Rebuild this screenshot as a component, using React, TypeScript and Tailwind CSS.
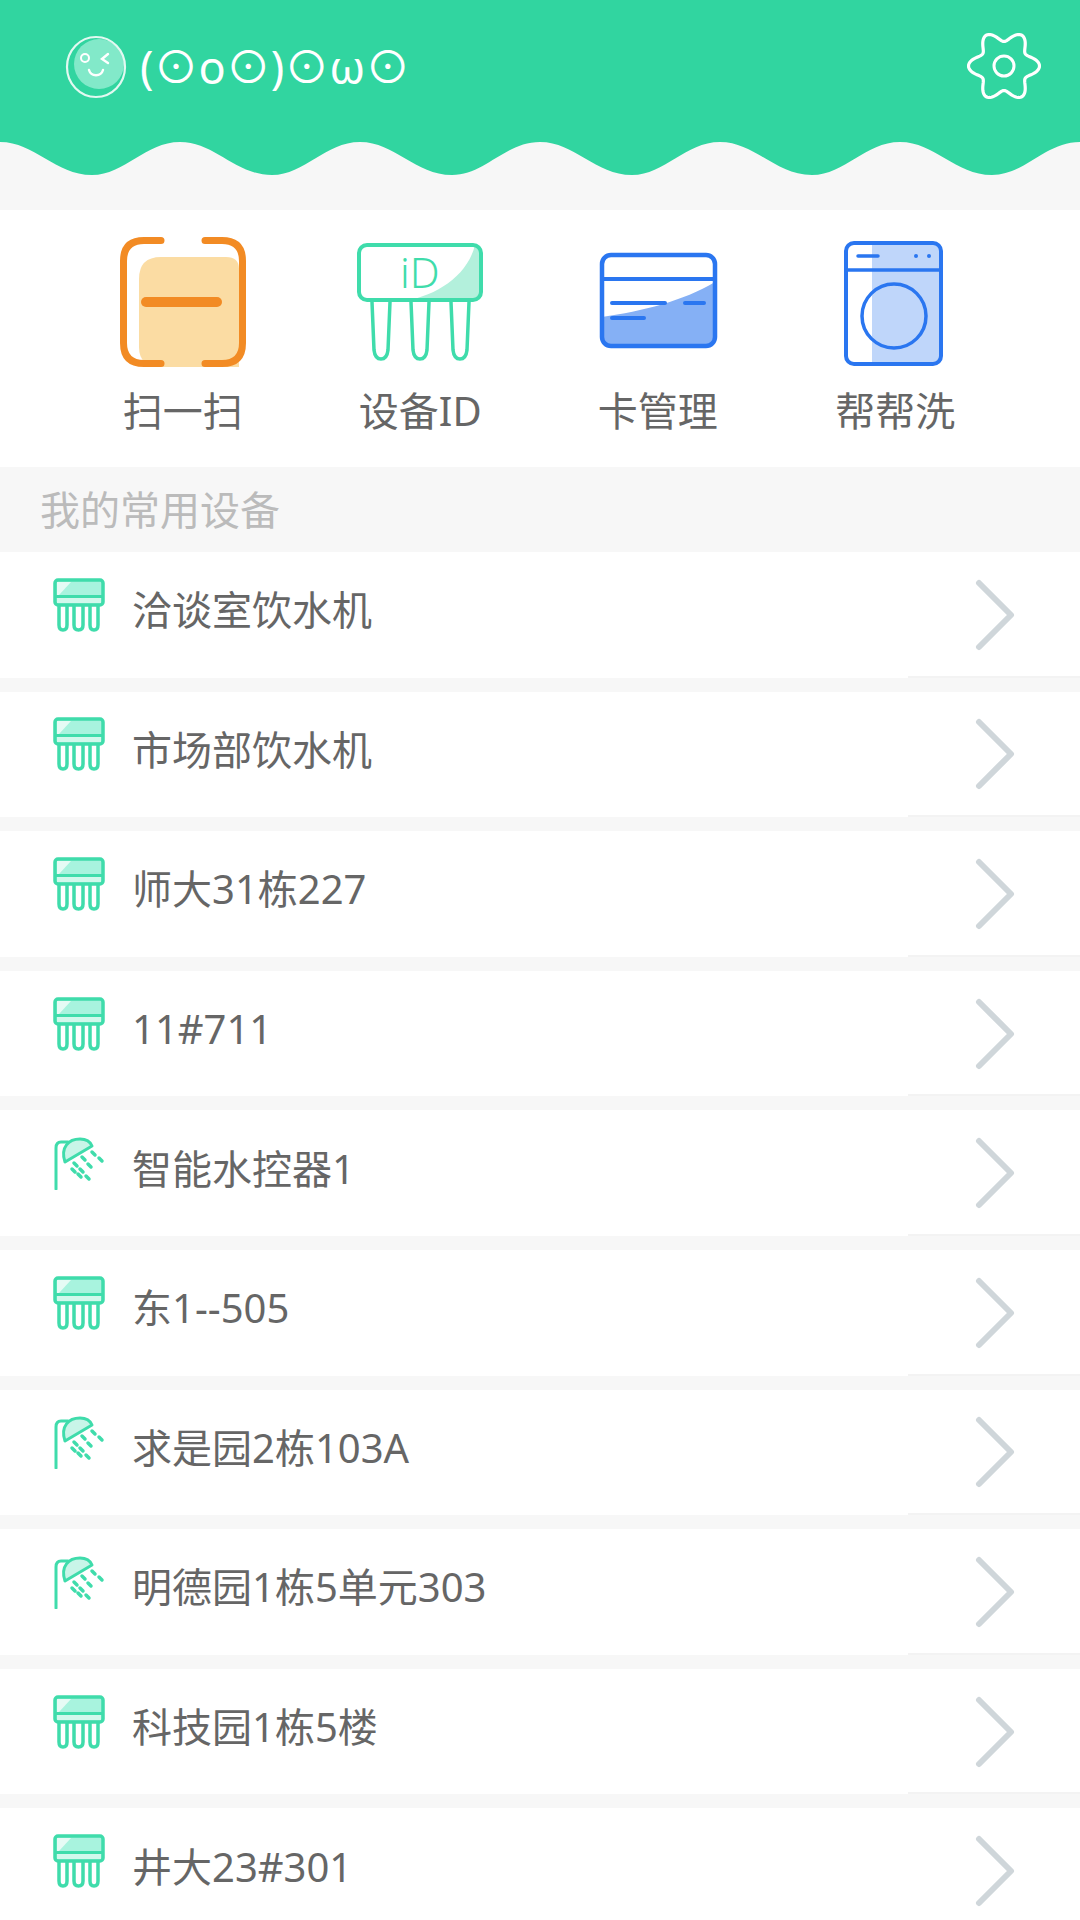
import React from 'react'

const GREEN = '#3fdcab'
const BLUE = '#2a76f0'
const ORANGE = '#f28b24'

const devices = [
  { name: '洽谈室饮水机', type: 'water' },
  { name: '市场部饮水机', type: 'water' },
  { name: '师大31栋227', type: 'water' },
  { name: '11#711', type: 'water' },
  { name: '智能水控器1', type: 'shower' },
  { name: '东1--505', type: 'water' },
  { name: '求是园2栋103A', type: 'shower' },
  { name: '明德园1栋5单元303', type: 'shower' },
  { name: '科技园1栋5楼', type: 'water' },
  { name: '井大23#301', type: 'water' },
]

// six lobed outline of the settings gear
const gearPath = () => {
  const pts: string[] = []
  for (let i = 0; i < 180; i++) {
    const t = (i / 180) * Math.PI * 2
    const r = 30 + 5.5 * Math.cos(6 * t)
    pts.push(`${(37 + r * Math.cos(t)).toFixed(2)} ${(36 + r * Math.sin(t)).toFixed(2)}`)
  }
  return 'M' + pts.join('L') + 'Z'
}

// one 180px swell of the header's lower edge, repeated six times
const wavePath = () => {
  let d = 'M0 0'
  for (let i = 0; i < 6; i++) {
    const x = i * 180
    d += ` C${x + 35} 0 ${x + 55} 33 ${x + 92} 33 C${x + 125} 33 ${x + 145} 0 ${x + 180} 0`
  }
  return d + ' Z'
}

const Wave: React.FC = () => (
  <svg viewBox="0 0 1080 68" className="block w-[1080px] h-[68px]">
    <path fill="#31d5a0" d={wavePath()} />
  </svg>
)

const Avatar: React.FC = () => (
  <svg viewBox="0 0 62 64" className="w-[62px] h-[64px] shrink-0">
    <circle cx="34" cy="29" r="25" fill="#82e9c9" />
    <ellipse cx="31" cy="32" rx="29" ry="30" fill="none" stroke="#e2f9f1" strokeWidth="2.200" />
    <circle cx="20" cy="23" r="4" fill="none" stroke="#fff" strokeWidth="2" />
    <path d="M43 19 L37 24 L43 28" fill="none" stroke="#fff" strokeWidth="2.400" strokeLinecap="round" />
    <path d="M24 35 C26 42 36 42 38 35" fill="none" stroke="#fff" strokeWidth="2.400" strokeLinecap="round" />
  </svg>
)

const ScanIcon: React.FC = () => (
  <svg viewBox="0 0 150 150" className="w-[150px] h-[150px]">
    <path d="M31 54 Q31 32 53 32 H118 Q131 32 131 44 V142 H53 Q31 142 31 122 Z" fill="#fbdca3" />
    <rect x="33" y="72" width="81" height="10" rx="5" fill={ORANGE} />
    <path d="M53 15.500 H36 Q15.500 15.500 15.500 36 V118 Q15.500 138.500 36 138.500 H53" fill="none" stroke={ORANGE} strokeWidth="7" strokeLinecap="round" />
    <path d="M97 15.500 H114 Q134.500 15.500 134.500 36 V118 Q134.500 138.500 114 138.500 H97" fill="none" stroke={ORANGE} strokeWidth="7" strokeLinecap="round" />
  </svg>
)

const IdIcon: React.FC = () => (
  <svg viewBox="0 0 150 150" className="w-[150px] h-[150px]">
    <path d="M54 77 C90 72 122 52 130 20 Q136 22 136 30 V68 Q136 75 128 75 Z" fill="#b3f0dc" />
    <rect x="14" y="20" width="122" height="55" rx="8" fill="none" stroke={GREEN} strokeWidth="4" />
    <path d="M27 77 L29 125 Q30 134 36 134 Q42 134 43 125 L45 77" fill="none" stroke={GREEN} strokeWidth="3.500" />
    <path d="M66 77 L68 125 Q69 134 75 134 Q81 134 82 125 L84 77" fill="none" stroke={GREEN} strokeWidth="3.500" />
    <path d="M106 77 L108 125 Q109 134 115 134 Q121 134 122 125 L124 77" fill="none" stroke={GREEN} strokeWidth="3.500" />
    <text x="55" y="63" fontSize="42" fontWeight="300" fill={GREEN} fontFamily="'Noto Sans', sans-serif">iD</text>
  </svg>
)

const CardIcon: React.FC = () => (
  <svg viewBox="0 0 150 150" className="w-[150px] h-[150px]">
    <path d="M19 92 C60 86 100 76 132 57 V112 Q132 121 123 121 H28 Q19 121 19 112 Z" fill="#85b0f5" />
    <rect x="19" y="30" width="113" height="91" rx="9" fill="none" stroke={BLUE} strokeWidth="4.500" />
    <path d="M19 54 H132" stroke={BLUE} strokeWidth="4" />
    <path d="M29 78 H82 M29 93 H61 M102 78 H121" stroke={BLUE} strokeWidth="4" strokeLinecap="round" />
  </svg>
)

const WasherIcon: React.FC = () => (
  <svg viewBox="0 0 150 150" className="w-[150px] h-[150px]">
    <path d="M52 18 H113 Q121 18 121 26 V131 Q121 139 113 139 H52 Z" fill="#bfd6fa" />
    <rect x="26" y="18" width="95" height="121" rx="8" fill="none" stroke={BLUE} strokeWidth="4" />
    <path d="M26 45 H121" stroke={BLUE} strokeWidth="3.500" />
    <path d="M38 31 H58" stroke={BLUE} strokeWidth="3.500" strokeLinecap="round" />
    <circle cx="96" cy="31" r="2" fill={BLUE} />
    <circle cx="109" cy="31" r="2" fill={BLUE} />
    <circle cx="74" cy="91" r="32" fill="none" stroke={BLUE} strokeWidth="3.500" />
  </svg>
)

const WaterIcon: React.FC = () => (
  <svg viewBox="0 0 52 54" className="w-[52px] h-[54px]">
    <rect x="2" y="2" width="48" height="25" rx="3" fill="#a8f3de" />
    <path d="M4 4 H18 L6 17 H4 Z" fill="#e6fbf5" />
    <path d="M4 20 H48 V25 H4 Z" fill="#d2f8ec" />
    <rect x="2" y="2" width="48" height="25" rx="3" fill="none" stroke={GREEN} strokeWidth="3.500" />
    <path d="M2 18.500 H50" stroke={GREEN} strokeWidth="3" />
    <path d="M6 27 V47 Q6 52 10 52 Q14 52 14 47 V27" fill="none" stroke={GREEN} strokeWidth="3.500" />
    <path d="M21 27 V47 Q21 52 25.500 52 Q30 52 30 47 V27" fill="none" stroke={GREEN} strokeWidth="3.500" />
    <path d="M37 27 V47 Q37 52 41 52 Q45 52 45 47 V27" fill="none" stroke={GREEN} strokeWidth="3.500" />
  </svg>
)

const ShowerIcon: React.FC = () => (
  <svg viewBox="0 0 52 54" className="w-[52px] h-[54px]">
    <path d="M12 26 C8 12 16 4 27 4 C33 4 36 6 38 10 Z" fill="#c9f5e8" />
    <path d="M3 53 V12 Q3 6 8 6 H15" fill="none" stroke={GREEN} strokeWidth="3" strokeLinecap="round" />
    <path d="M12 26 C7 11 16 3 27 3 C33 3 37 5 39 10 Z" fill="none" stroke={GREEN} strokeWidth="3" strokeLinejoin="round" />
    <path
      d="M21 27 L24 30 M27 33 L30 36 M33 40 L36 43 M29 21 L32 24 M35 28 L38 31 M25 38 L28 41 M39 16 L42 19 M46 22 L49 25 M19 33 L22 36"
      stroke={GREEN}
      strokeWidth="3.500"
      strokeLinecap="round"
    />
  </svg>
)

const navItems = [
  { label: '扫一扫', icon: <ScanIcon /> },
  { label: '设备ID', icon: <IdIcon /> },
  { label: '卡管理', icon: <CardIcon /> },
  { label: '帮帮洗', icon: <WasherIcon /> },
]

const App: React.FC = () => {
  return (
    <div className="w-[1080px] h-[1920px] overflow-hidden bg-[#f7f7f7] font-['Noto_Sans','Noto_Sans_CJK_SC',sans-serif]">
      <div className="bg-[#31d5a0] h-[142px] pl-[65px] pr-[39px] pt-[33px] flex items-start justify-between">
        <div className="flex items-center gap-[13px] h-[68px]">
          <Avatar />
          <span className="text-white text-[45px] leading-[66px]">(⊙o⊙)⊙ω⊙</span>
        </div>
        <svg viewBox="0 0 74 72" className="w-[74px] h-[72px] -mt-[3px]">
          <path d={gearPath()} fill="none" stroke="#fff" strokeWidth="3.200" />
          <circle cx="37" cy="36" r="10" fill="none" stroke="#fff" strokeWidth="3" />
        </svg>
      </div>
      <Wave />

      <div className="bg-white h-[257px] pl-[64px] pr-[66px] pt-[15px] grid grid-cols-4 content-start">
        {navItems.map((item) => (
          <div key={item.label} className="flex flex-col items-center">
            {item.icon}
            <span className="text-[40px] leading-[72px] text-[#666]">{item.label}</span>
          </div>
        ))}
      </div>

      <div className="h-[85px] pl-[40px] flex items-center text-[40px] text-[#bbb]">我的常用设备</div>

      {devices.map((d) => (
        <div key={d.name} className="relative bg-white h-[125.6px] mb-[14px] flex items-center pl-[53px] pr-[65px]">
          <div className="mb-[20px]">{d.type === 'water' ? <WaterIcon /> : <ShowerIcon />}</div>
          <span className="ml-[27px] mb-[9px] text-[40px] leading-[56px] text-[#666]">{d.name}</span>
          <svg viewBox="0 0 40 72" className="ml-auto w-[40px] h-[72px]">
            <path d="M4 4 L36 36 L4 68" fill="none" stroke="#cfd6da" strokeWidth="6" strokeLinecap="round" strokeLinejoin="round" />
          </svg>
          <div className="absolute right-0 bottom-0 w-[172px] h-[2px] bg-[#f3f3f3]" />
        </div>
      ))}
    </div>
  )
}

export default App
